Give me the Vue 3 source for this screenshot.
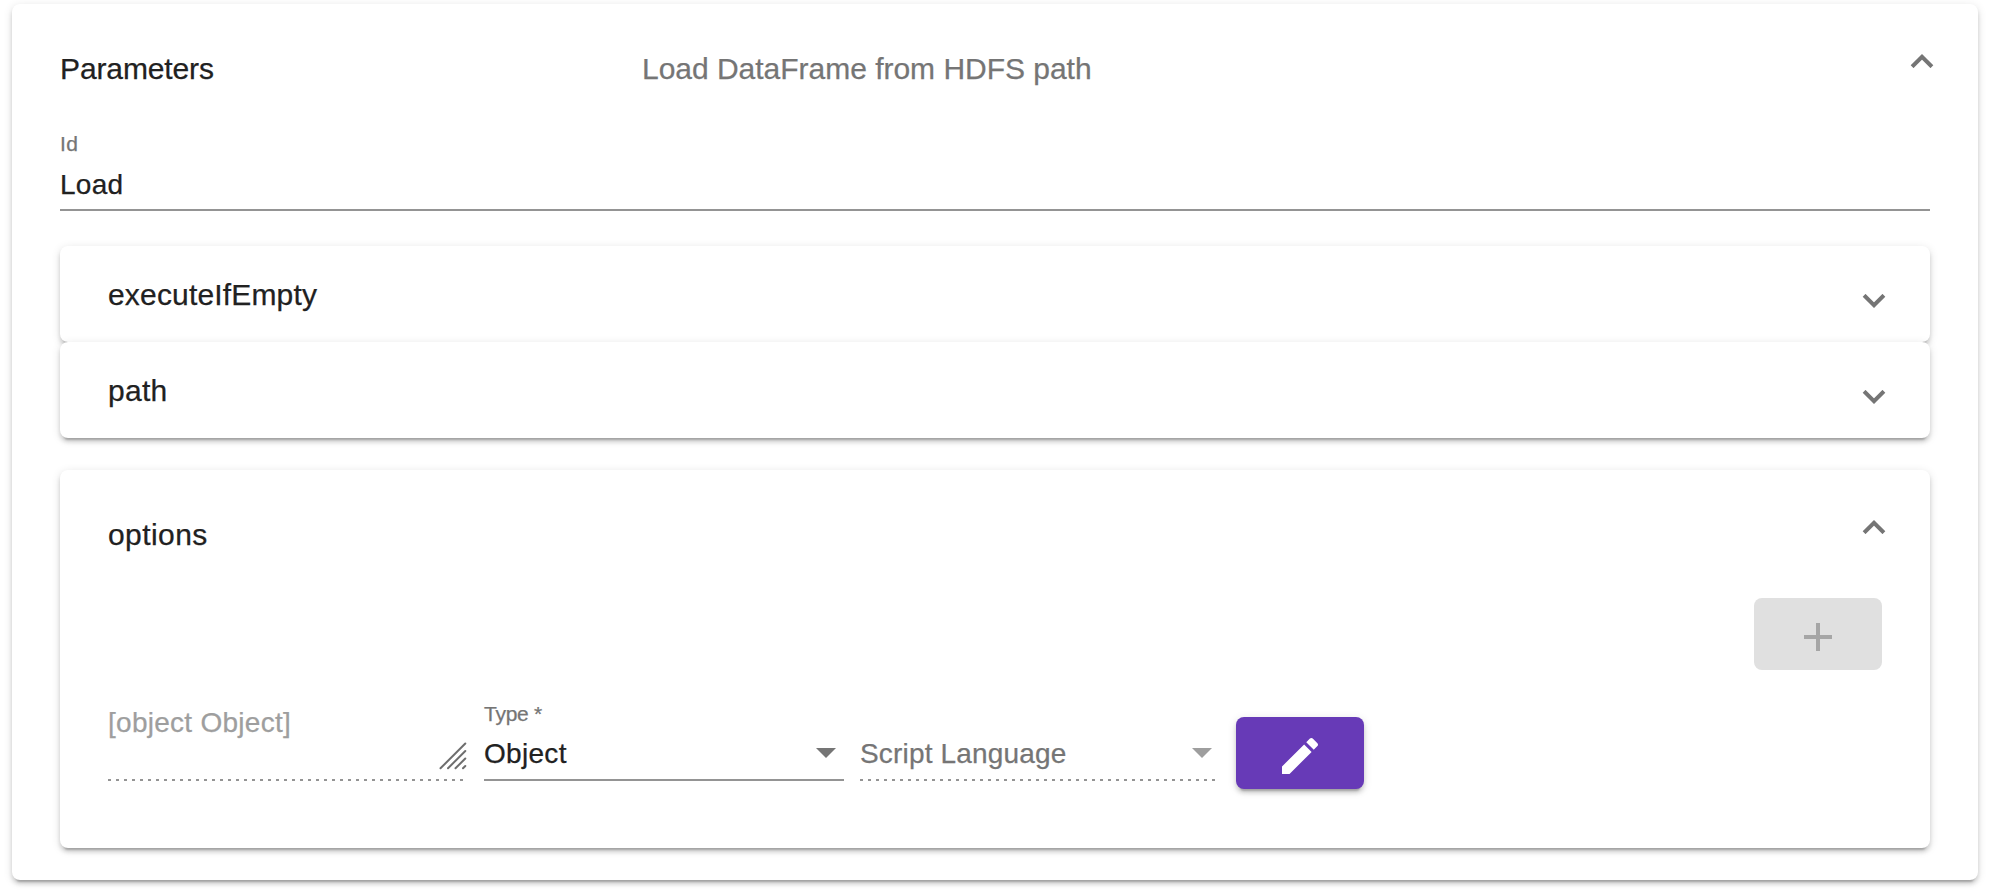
<script setup>
const panels = ['executeIfEmpty', 'path']
</script>

<template>
  <div class="page">
    <main class="card outer">
      <header class="head">
        <h2 class="title t-param">Parameters</h2>
        <p class="desc">Load DataFrame from HDFS path</p>
        <svg class="chev" width="24" height="16" viewBox="0 0 24 16"><path d="M2.1 14.73 12 4.83l9.9 9.9" /></svg>
      </header>

      <div class="field id-field">
        <label class="label t-id">Id</label>
        <span class="value t-load">Load</span>
      </div>

      <section class="list">
        <div v-for="name in panels" :key="name" class="card panel">
          <h3 class="title" :class="'t-' + name">{{ name }}</h3>
          <svg class="chev" width="24" height="16" viewBox="0 0 24 16"><path d="M2.1 1.27 12 11.17l9.9-9.9" /></svg>
        </div>
      </section>

      <section class="card options">
        <header class="options-head">
          <h3 class="title t-options">options</h3>
          <svg class="chev" width="24" height="16" viewBox="0 0 24 16"><path d="M2.1 14.73 12 4.83l9.9 9.9" /></svg>
        </header>
        <div class="toolbar">
          <button class="btn add" disabled aria-label="Add">
            <svg width="28" height="28" viewBox="0 0 28 28"><path d="M12 0h4v12h12v4H16v12h-4V16H0v-4h12z" /></svg>
          </button>
        </div>
        <div class="row">
          <div class="cell dotted area">
            <span class="value muted t-obj">[object Object]</span>
            <svg class="grip" width="28" height="28" viewBox="0 0 28 28"><path d="M1.5 26.3 26.3 1.5M9 26.3 26.3 9M16.5 26.3l9.8-9.8M24 26.3l2.3-2.3" /></svg>
          </div>
          <div class="cell solid">
            <label class="label t-type">Type *</label>
            <div class="select">
              <span class="value t-object">Object</span>
              <svg class="arrow" width="20" height="10" viewBox="0 0 20 10"><path d="M0 0h20L10 10z" /></svg>
            </div>
          </div>
          <div class="cell dotted disabled">
            <div class="select">
              <span class="value t-script">Script Language</span>
              <svg class="arrow" width="20" height="10" viewBox="0 0 20 10"><path d="M0 0h20L10 10z" /></svg>
            </div>
          </div>
          <button class="btn edit" aria-label="Edit">
            <svg width="48" height="48" viewBox="0 0 24 24"><path d="M3 17.25V21h3.75L17.81 9.94l-3.75-3.75L3 17.25zM20.71 7.04c.39-.39.39-1.02 0-1.41l-2.34-2.34c-.39-.39-1.02-.39-1.41 0l-1.83 1.83 3.75 3.75 1.83-1.83z" /></svg>
          </button>
        </div>
      </section>
    </main>
  </div>
</template>

<style>
body {
  background: #fff;
}
</style>

<style scoped>
* {
  box-sizing: border-box;
}
.page {
  height: 892px;
  padding: 4px 14px 12px 12px;
  overflow: hidden;
  font-family: "Liberation Sans", Arial, sans-serif;
  color: #212121;
  -webkit-text-stroke: 0.25px currentColor;
}
.card {
  background: #fff;
  border-radius: 8px;
  box-shadow: 0 6px 2px -4px rgba(0, 0, 0, 0.2), 0 4px 4px 0 rgba(0, 0, 0, 0.14), 0 2px 10px 0 rgba(0, 0, 0, 0.12);
}
.outer {
  height: 876px;
  padding: 0 48px;
}
.head {
  height: 128px;
  display: flex;
  align-items: center;
}
.title,
.desc {
  margin: 0;
  padding-top: 2px;
  font-size: 30px;
  line-height: 40px;
  font-weight: 400;
  white-space: nowrap;
}
.head .title {
  width: 582px;
}
.desc {
  color: #757575;
  letter-spacing: -0.02px;
}
.chev {
  margin-left: auto;
  fill: none;
  stroke: #757575;
  stroke-width: 4;
}
.head .chev {
  margin: 0 -4px 16px auto;
}
.field {
  display: flex;
  flex-direction: column;
}
.id-field {
  height: 79px;
  border-bottom: 2px solid #949494;
}
.label {
  font-size: 21px;
  line-height: 24px;
  color: #757575;
}
.value {
  font-size: 28px;
  line-height: 32px;
  white-space: nowrap;
}
.id-field .value {
  margin-top: 13px;
}
.t-param {
  letter-spacing: -0.12px;
}
.t-id,
.t-load,
.t-path,
.t-object {
  letter-spacing: 0.3px;
}
.t-executeIfEmpty,
.t-script {
  letter-spacing: 0.17px;
}
.t-options {
  letter-spacing: 0.42px;
}
.t-obj {
  letter-spacing: 0.27px;
}
.t-type {
  letter-spacing: -0.25px;
}
.list {
  margin-top: 35px;
}
.panel {
  height: 96px;
  padding: 0 44px 0 48px;
  display: flex;
  align-items: center;
}
.panel .chev {
  margin-top: 16px;
}
.options {
  margin-top: 32px;
  height: 378px;
  padding: 0 48px;
}
.options-head {
  height: 128px;
  display: flex;
  align-items: center;
}
.options-head .chev {
  margin: 0 -4px 16px auto;
}
.toolbar {
  display: flex;
  justify-content: flex-end;
}
.btn {
  width: 128px;
  height: 72px;
  padding: 6px 0 0;
  border: 0;
  border-radius: 8px;
  display: flex;
  align-items: center;
  justify-content: center;
}
.add {
  background: #e0e0e0;
}
.add svg {
  fill: #a6a6a6;
}
.edit {
  margin-top: 15px;
  background: #673ab7;
  box-shadow: 0 6px 2px -4px rgba(0, 0, 0, 0.2), 0 4px 4px 0 rgba(0, 0, 0, 0.14), 0 2px 10px 0 rgba(0, 0, 0, 0.12);
}
.edit svg {
  fill: #fff;
}
.row {
  margin-top: 32px;
  display: flex;
  gap: 16px;
}
.cell {
  width: 360px;
  height: 79px;
  display: flex;
  flex-direction: column;
}
.solid {
  border-bottom: 2px solid #949494;
}
.dotted {
  background: repeating-linear-gradient(to right, #949494 0 3px, transparent 3px 8px) 0 100% / 356px 2px no-repeat;
}
.area {
  flex-direction: row;
  justify-content: space-between;
}
.muted {
  margin-top: 5px;
  color: #9e9e9e;
}
.grip {
  margin: 40px 1px 0 0;
  fill: none;
  stroke: #6e6e6e;
  stroke-width: 2;
  stroke-linecap: round;
}
.select {
  margin-top: auto;
  height: 41px;
  padding-right: 8px;
  display: flex;
  align-items: flex-start;
  justify-content: space-between;
}
.dotted .select {
  height: 43px;
}
.arrow {
  margin-top: 10px;
  fill: #757575;
}
.disabled .value {
  color: #757575;
}
.disabled .arrow {
  fill: #9e9e9e;
}
</style>
